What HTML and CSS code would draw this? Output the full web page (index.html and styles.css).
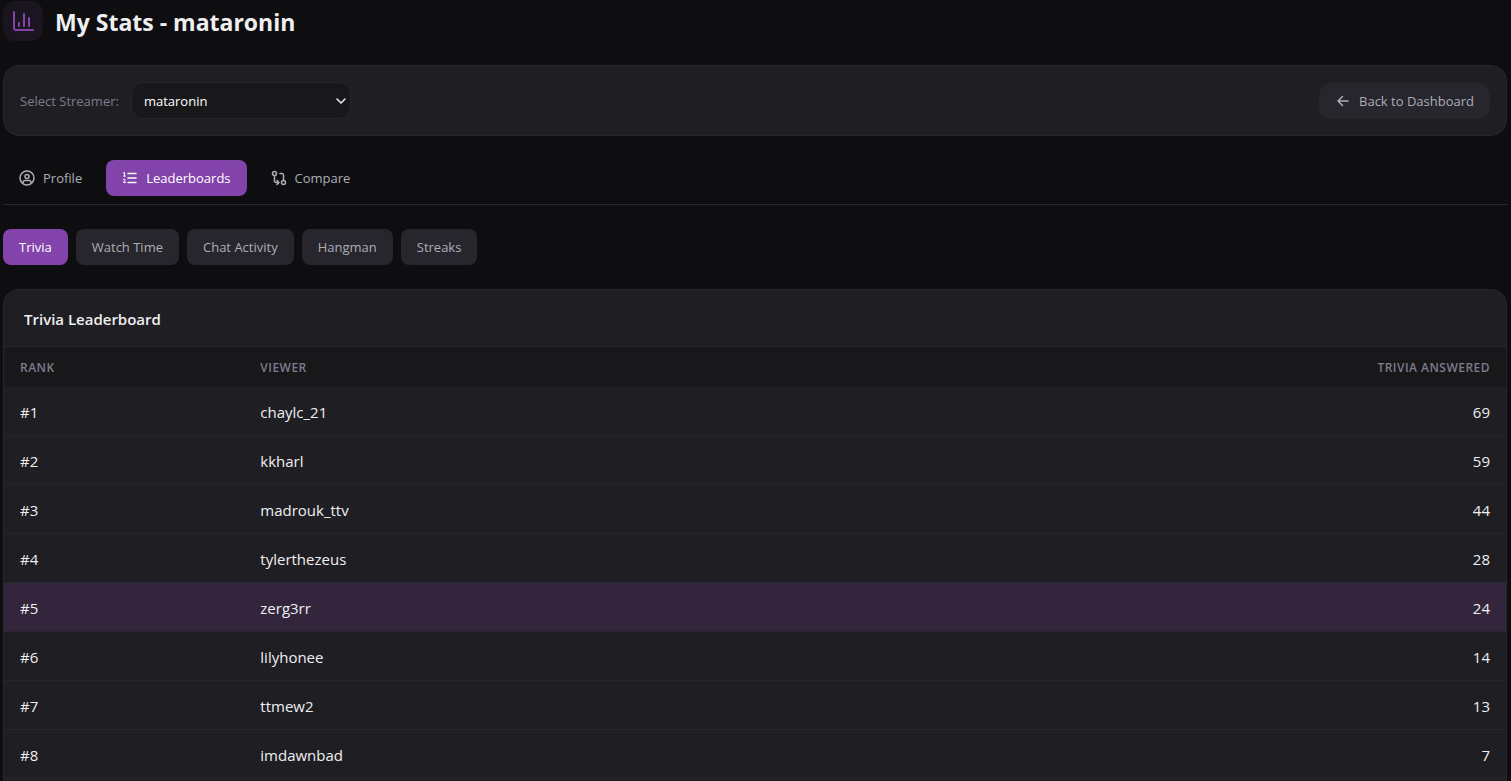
FILE: index.html
```
<!DOCTYPE html>
<html lang="en">
<head>
  <meta charset="UTF-8">
  <meta name="viewport" content="width=device-width, initial-scale=1.0">
  <title>My Stats - mataronin</title>
  <link rel="stylesheet" href="styles.css">
</head>
<body>
  <header class="page-header">
    <div class="header-icon">
      <svg width="24" height="24" viewBox="0 0 24 24" aria-hidden="true">
        <path d="M3 3v16a2 2 0 0 0 2 2h17M8 17v-3M13 17V5M18 17V9"/>
      </svg>
    </div>
    <h1>My Stats - mataronin</h1>
  </header>

  <section class="card toolbar">
    <div class="streamer">
      <label for="streamer">Select Streamer:</label>
      <div class="select-wrap">
        <select id="streamer" name="streamer">
          <option>mataronin</option>
        </select>
        <svg class="chevron" width="10" height="6" viewBox="0 0 10 6" aria-hidden="true"><path d="M1 1l4 4 4-4"/></svg>
      </div>
    </div>
    <a class="btn back" href="#">
      <svg width="16" height="16" viewBox="0 0 16 16" aria-hidden="true"><path d="M13 8H3M7.500 3.500L3 8l4.500 4.500"/></svg>
      Back to Dashboard
    </a>
  </section>

  <nav class="tabs">
    <button type="button" class="tab">
      <svg width="16" height="16" viewBox="0 0 16 16" aria-hidden="true">
        <circle cx="8" cy="8" r="7"/><circle cx="8" cy="6.500" r="2"/>
        <path d="M4 13v-.5a2 2 0 0 1 2-2h4a2 2 0 0 1 2 2v.5"/>
      </svg>
      Profile
    </button>
    <button type="button" class="tab active">
      <svg width="16" height="16" viewBox="0 0 16 16" aria-hidden="true">
        <path d="M6 3.500h8M6 8h8M6 12.500h8"/>
        <path class="thin" d="M1.500 3l1-.5V6M1.500 6h2M1.500 9.500c2-1 2 .5 1 1.500l-1 1.500h2"/>
      </svg>
      Leaderboards
    </button>
    <button type="button" class="tab">
      <svg width="16" height="16" viewBox="0 0 16 16" aria-hidden="true">
        <circle cx="3.500" cy="3.500" r="2"/><circle cx="12.500" cy="12.500" r="2"/>
        <path d="M3.500 5.500V11a1.500 1.500 0 0 0 1.500 1.500h2.500M6 10.500l2 2-2 2M12.500 10.500V5A1.500 1.500 0 0 0 11 3.500H9"/>
      </svg>
      Compare
    </button>
  </nav>

  <div class="filters">
    <button type="button" class="btn active">Trivia</button>
    <button type="button" class="btn">Watch Time</button>
    <button type="button" class="btn">Chat Activity</button>
    <button type="button" class="btn">Hangman</button>
    <button type="button" class="btn">Streaks</button>
  </div>

  <section class="card board">
    <h2>Trivia Leaderboard</h2>
    <table>
      <thead>
        <tr><th class="rank">Rank</th><th>Viewer</th><th class="score">Trivia Answered</th></tr>
      </thead>
      <tbody>
        <tr><td>#1</td><td>chaylc_21</td><td class="score">69</td></tr>
        <tr><td>#2</td><td>kkharl</td><td class="score">59</td></tr>
        <tr><td>#3</td><td>madrouk_ttv</td><td class="score">44</td></tr>
        <tr><td>#4</td><td>tylerthezeus</td><td class="score">28</td></tr>
        <tr class="me"><td>#5</td><td>zerg3rr</td><td class="score">24</td></tr>
        <tr><td>#6</td><td>lilyhonee</td><td class="score">14</td></tr>
        <tr><td>#7</td><td>ttmew2</td><td class="score">13</td></tr>
        <tr><td>#8</td><td>imdawnbad</td><td class="score">7</td></tr>
      </tbody>
    </table>
  </section>
</body>
</html>
```
FILE: styles.css
```
* {
  box-sizing: border-box;
}
body {
  display: flex;
  flex-direction: column;
  height: 100vh;
  margin: 0;
  padding: 1px 4px 0 3px;
  overflow: hidden;
  background: #0e0e10;
  color: #efeff1;
  font-family: "Segoe UI", "Open Sans", "Noto Sans", sans-serif;
  font-size: 13px;
  line-height: 20px;
}
h1, h2 {
  margin: 0;
}
svg {
  flex: none;
  fill: none;
  stroke: currentColor;
  stroke-width: 1.5;
  stroke-linecap: round;
  stroke-linejoin: round;
}
button, select {
  font: inherit;
  cursor: pointer;
}
.page-header {
  display: flex;
  align-items: center;
  gap: 12px;
  margin-bottom: 24px;
}
.page-header h1 {
  padding-top: 2px;
  font-size: 23px;
  font-weight: 700;
  line-height: 32px;
}
.header-icon {
  display: flex;
  align-items: center;
  justify-content: center;
  width: 40px;
  height: 40px;
  border-radius: 12px;
  background: #1a151f;
  color: #8244aa;
}
.header-icon svg {
  stroke-width: 2;
}
.card {
  border: 1px solid #26262c;
  border-radius: 16px;
  background: #1f1e23;
}
.toolbar {
  display: flex;
  align-items: center;
  justify-content: space-between;
  margin-bottom: 24px;
  padding: 16px;
}
.streamer {
  display: flex;
  align-items: center;
  gap: 12px;
}
.streamer label {
  color: #7c7c8a;
}
.select-wrap {
  position: relative;
}
.select-wrap select {
  display: block;
  width: 220px;
  height: 37px;
  padding: 0 12px;
  border: 1px solid #26262c;
  border-radius: 12px;
  background: #18181b;
  color: #fff;
  appearance: none;
}
.chevron {
  position: absolute;
  top: 16px;
  right: 5px;
  pointer-events: none;
}
.btn, .tab {
  display: flex;
  align-items: center;
  height: 36px;
  padding: 0 16px;
  border: none;
  border-radius: 8px;
  background: #26262c;
  color: #adadb8;
  text-decoration: none;
}
.back {
  gap: 8px;
  border-radius: 12px;
}
.tabs {
  display: flex;
  gap: 8px;
  margin-bottom: 24px;
  padding-bottom: 8px;
  border-bottom: 1px solid #26262c;
}
.tab {
  gap: 8px;
  background: none;
}
.btn.active, .tab.active {
  background: #8244aa;
  color: #fff;
}
.thin {
  stroke-width: 1;
}
.filters {
  display: flex;
  gap: 8px;
  margin-bottom: 24px;
}
.board {
  flex: 1 0 auto;
  border-bottom: none;
  border-radius: 16px 16px 0 0;
  overflow: hidden;
}
.board h2 {
  padding: 19px 20px 17px;
  border-bottom: 1px solid #26262c;
  font-size: 15px;
  font-weight: 600;
}
table {
  width: 100%;
  border-collapse: separate;
  border-spacing: 0;
}
th {
  height: 40px;
  padding: 1px 16px 0;
  background: #18181b;
  color: #7c7c8a;
  font-size: 12px;
  font-weight: 600;
  letter-spacing: 0.04em;
  text-align: left;
  text-transform: uppercase;
}
td {
  height: 49px;
  padding: 2px 16px 0;
  border-bottom: 1px solid #26262c;
  font-size: 15px;
}
.rank {
  width: 16%;
}
.score {
  text-align: right;
}
td.score {
  font-weight: 500;
}
.me {
  background: #33263c;
}
```
